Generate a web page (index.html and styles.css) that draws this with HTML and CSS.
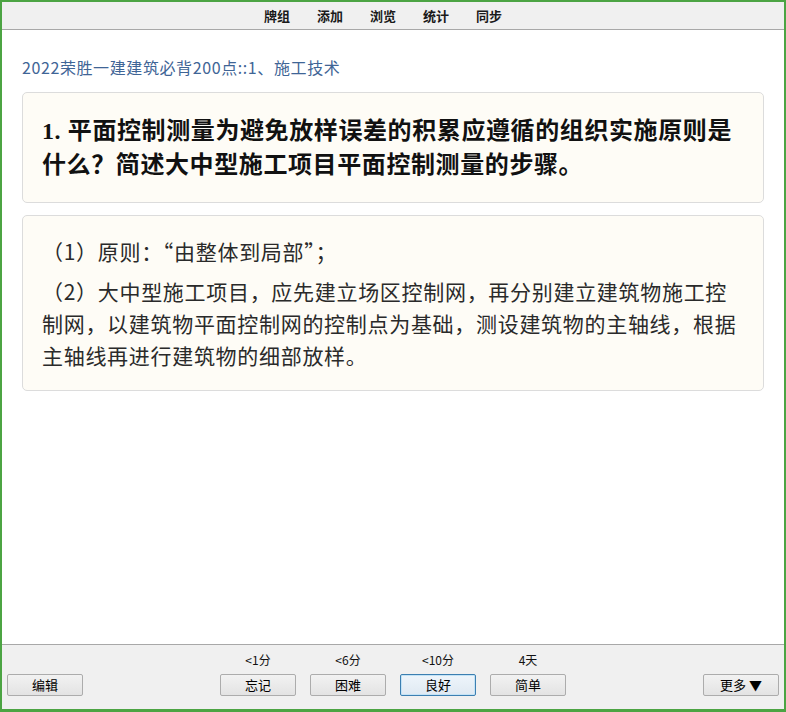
FILE: index.html
```html
<!DOCTYPE HTML>
<html lang="zh-CN">

<head>
    <title>Anki - 复习</title>
    <meta charset="utf-8">
    <meta name="viewport" content="width=device-width, initial-scale=1">
    <link rel="stylesheet" href="styles.css">
</head>

<body>
    <div id="window">
        <div class="toolbar">
            <a href="#">牌组</a>
            <a href="#">添加</a>
            <a href="#">浏览</a>
            <a href="#">统计</a>
            <a href="#">同步</a>
        </div>

        <div id="main">
            <div class="deck">2022荣胜一建建筑必背200点::1、施工技术</div>

            <div class="card question">
                1. 平面控制测量为避免放样误差的积累应遵循的组织实施原则是什么？简述大中型施工项目平面控制测量的步骤。
            </div>

            <div class="card answer">
                <p>（1）原则：“由整体到局部”；</p>
                <p>（2）大中型施工项目，应先建立场区控制网，再分别建立建筑物施工控制网，以建筑物平面控制网的控制点为基础，测设建筑物的主轴线，根据主轴线再进行建筑物的细部放样。</p>
            </div>
        </div>

        <div class="bottombar">
            <div class="side">
                <button type="button" class="btn">编辑</button>
            </div>
            <div class="ease">
                <div class="ease-item">
                    <span class="due">&lt;1分</span>
                    <button type="button" class="btn">忘记</button>
                </div>
                <div class="ease-item">
                    <span class="due">&lt;6分</span>
                    <button type="button" class="btn">困难</button>
                </div>
                <div class="ease-item">
                    <span class="due">&lt;10分</span>
                    <button type="button" class="btn focus">良好</button>
                </div>
                <div class="ease-item">
                    <span class="due">4天</span>
                    <button type="button" class="btn">简单</button>
                </div>
            </div>
            <div class="side right">
                <button type="button" class="btn">更多 ▼</button>
            </div>
        </div>
    </div>
</body>

</html>
```

FILE: styles.css
```css
html, body {
    margin: 0;
    padding: 0;
    height: 100%;
}

body {
    font-family: "Noto Sans CJK SC", "Liberation Sans", sans-serif;
    background-color: #fff;
    color: #000;
}

#window {
    height: 100vh;
    box-sizing: border-box;
    border: 2px solid #4ca443;
    border-bottom-width: 3px;
    display: flex;
    flex-direction: column;
}

.toolbar {
    height: 27px;
    flex-shrink: 0;
    background-color: #f0f0f0;
    border-bottom: 1px solid #a8a8a8;
    display: flex;
    justify-content: center;
    align-items: center;
    gap: 27px;
    padding-right: 20px;
}

.toolbar a {
    color: #1a1a1a;
    font-size: 13px;
    font-weight: bold;
    text-decoration: none;
    line-height: 16px;
}

#main {
    flex: 1;
    padding: 27px 20px 0;
    overflow: hidden;
}

.deck {
    font-size: 16px;
    letter-spacing: 0.6px;
    line-height: 20px;
    color: #3f6596;
    margin-bottom: 15px;
}

.card {
    background-color: #fefcf6;
    border: 1px solid #dcdcdc;
    border-radius: 5px;
    padding: 20px 19px;
    margin-bottom: 12px;
}

.question {
    font-family: "Liberation Serif", "Noto Sans CJK SC", serif;
    font-size: 24px;
    letter-spacing: 0.6px;
    font-weight: bold;
    line-height: 34px;
    color: #111;
    padding-top: 21px;
}

.answer {
    padding-top: 19px;
    padding-bottom: 19px;
}

.answer p {
    margin: 0;
    font-size: 21px;
    letter-spacing: 0.7px;
    line-height: 32px;
    color: #2a2a2a;
}

.answer p + p {
    margin-top: 8px;
}

.bottombar {
    height: 65px;
    flex-shrink: 0;
    box-sizing: border-box;
    background-color: #f0f0f0;
    border-top: 1px solid #a8a8a8;
    display: grid;
    grid-template-columns: 1fr auto 1fr;
    align-items: end;
    padding: 0 5px 13px;
}

.side.right {
    text-align: right;
}

.ease {
    display: flex;
    gap: 14px;
}

.ease-item {
    display: flex;
    flex-direction: column;
    align-items: center;
    gap: 6px;
}

.due {
    font-size: 12px;
    line-height: 16px;
    color: #111;
}

.btn {
    width: 76px;
    height: 22px;
    font-family: "Noto Sans CJK SC", sans-serif;
    font-size: 13px;
    line-height: 18px;
    padding: 0;
    color: #000;
    border: 1px solid #acacac;
    border-radius: 2px;
    background: linear-gradient(#f2f2f2, #e3e3e3);
    cursor: pointer;
}

.btn.focus {
    border-color: #3c7fb1;
    box-shadow: inset 0 0 0 1px #c4e3f6;
    background: linear-gradient(#eef5fb, #dfe9f2);
}
```
